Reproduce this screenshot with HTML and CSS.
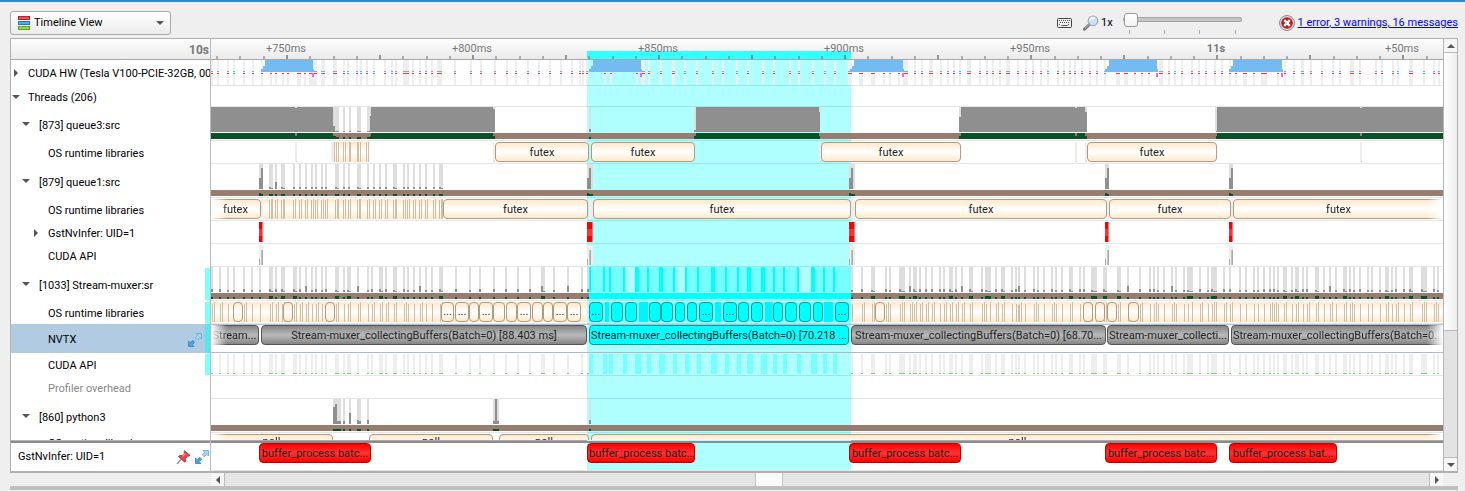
FILE: index.html
```html
<!DOCTYPE html>
<html lang="en">
<head>
<meta charset="utf-8">
<title>Timeline View</title>
<link rel="stylesheet" href="styles.css">
</head>
<body>
<svg class="defs" aria-hidden="true">
  <symbol id="expand" viewBox="0 0 14 14">
    <path d="M8 .5h5.500v5.500L11.700 4.200 9.200 6.700 7.300 4.800 9.800 2.300z" fill="#a9d8f5" stroke="#5ba8d8" stroke-width=".8"/>
    <path d="M6 13.500H.500V8L2.300 9.800 4.800 7.300 6.700 9.200 4.200 11.700z" fill="#49a5e0" stroke="#2b86c4" stroke-width=".8"/>
  </symbol>
</svg>
<header class="toolbar">
  <div class="view-picker">
    <svg class="view-icon" width="12" height="14" viewBox="0 0 12 14" aria-hidden="true">
      <rect x=".5" y=".5" width="11" height="3" fill="#e8515c" stroke="#b8202c"/>
      <rect x=".5" y="5.500" width="11" height="3" fill="#43b1ea" stroke="#1b7db8"/>
      <rect x=".5" y="10.500" width="11" height="3" fill="#9bd455" stroke="#62a023"/>
    </svg>
    <select class="view-select" aria-label="View"><option>Timeline View</option></select>
    <i class="tri tri-down view-arrow"></i>
  </div>
  <div class="tools">
    <button class="tool" aria-label="Keyboard shortcuts">
      <svg width="15" height="10" viewBox="0 0 15 10"><rect x=".5" y=".5" width="14" height="9" rx="1" fill="#eee" stroke="#444"/><path d="M2 2.500h11M3 4.500h10M2 6.500h2M11 6.500h2" stroke="#555" stroke-dasharray="1 1"/><path d="M4.500 7.500h6" stroke="#555"/></svg>
    </button>
    <label class="zoom-label" for="zoom">
      <svg width="16" height="16" viewBox="0 0 16 16" aria-hidden="true"><path d="M1.500 14.200 6.500 9.500" stroke="#777" stroke-width="3" stroke-linecap="round"/><path d="M1.700 13.700 6.200 9.400" stroke="#bbb" stroke-width="1"/><circle cx="10" cy="5.800" r="4.800" fill="#c9e4f6" stroke="#a3abb2" stroke-width="1.200"/><path d="M7 5.500a3 3 0 0 1 5-2" fill="none" stroke="#fff" stroke-width="1.500"/></svg>
      1x
    </label>
    <div class="zoom">
      <input class="zoom-slider" id="zoom" type="range" min="1" max="4" value="1">
      <div class="zoom-ticks"><i></i><i></i><i></i><i></i></div>
    </div>
    <svg class="error-icon" width="16" height="16" viewBox="0 0 16 16" aria-hidden="true"><circle cx="8" cy="8" r="7.500" fill="#ddd" stroke="#8a8a8a"/><circle cx="8" cy="8" r="5.800" fill="#c0161b"/><path d="M5.200 5.200 10.800 10.800M10.800 5.200 5.200 10.800" stroke="#fff" stroke-width="2.600"/></svg>
    <a class="messages" href="#">1 error, 3 warnings, 16 messages</a>
  </div>
</header>

<main class="panel">
  <div class="tree">
    <div class="tree-head">10s</div>
    <div class="row h26 l0"><button class="twisty" aria-label="Expand"><i class="tri tri-right"></i></button>CUDA HW (Tesla V100-PCIE-32GB, 0000:06)</div>
    <div class="row h21 l0"><button class="twisty" aria-label="Collapse"><i class="tri tri-down"></i></button>Threads (206)</div>
    <div class="row h34 l1"><button class="twisty" aria-label="Collapse"><i class="tri tri-down"></i></button>[873] queue3:src</div>
    <div class="row h23 l2">OS runtime libraries</div>
    <div class="row h34 l1"><button class="twisty" aria-label="Collapse"><i class="tri tri-down"></i></button>[879] queue1:src</div>
    <div class="row h23 l2">OS runtime libraries</div>
    <div class="row h23 l2"><button class="twisty" aria-label="Expand"><i class="tri tri-right"></i></button>GstNvInfer: UID=1</div>
    <div class="row h23 l2">CUDA API</div>
    <div class="row h34 l1 marked"><button class="twisty" aria-label="Collapse"><i class="tri tri-down"></i></button>[1033] Stream-muxer:sr</div>
    <div class="row h23 l2 marked">OS runtime libraries</div>
    <div class="row h29 l2 marked current">NVTX<svg class="row-icon" width="14" height="14"><use href="#expand"/></svg></div>
    <div class="row h23 l2 marked">CUDA API</div>
    <div class="row h23 l2 muted">Profiler overhead</div>
    <div class="row h34 l1"><button class="twisty" aria-label="Collapse"><i class="tri tri-down"></i></button>[860] python3</div>
    <div class="cut"><div class="row h21 l2">OS runtime libraries</div></div>
    <div class="row h28 pinned">GstNvInfer: UID=1
      <span class="pin-icons">
        <svg width="15" height="15" viewBox="0 0 15 15" aria-hidden="true"><path d="M1 14 6 8.500" stroke="#8c8c8c" stroke-width="1.200"/><path d="M8.500.8 14 5.500 12.500 6.300 11.600 6 9.500 8.500 9.700 11 8.700 12.200 2.500 6.500 3.600 5.600 6.200 5.700 8.500 3.300 8 2z" fill="#e5484b" stroke="#b32024" stroke-width=".8"/><path d="M9 3.500 6.800 6.500" stroke="#f7a3a3" stroke-width="1.200"/></svg>
        <svg width="14" height="14"><use href="#expand"/></svg>
      </span>
    </div>
  </div>
  <div class="chart">
    <div class="selection"></div>
    <div class="axis" id="axis"></div>
    <div id="lanes"></div>
  </div>
  <div class="vscroll">
    <button class="sbtn up" aria-label="Scroll up"><i class="tri tri-up"></i></button>
    <div class="vthumb"></div>
    <div class="vtrack"></div>
    <button class="sbtn down" aria-label="Scroll down"><i class="tri tri-down"></i></button>
  </div>
</main>
<div class="hscroll">
  <button class="sbtn left" aria-label="Scroll left"><i class="tri tri-left"></i></button>
  <div class="htrack"><div class="hthumb"></div></div>
  <button class="sbtn right" aria-label="Scroll right"><i class="tri tri-right"></i></button>
</div>
<footer class="edge"></footer>
<script src="timeline.js"></script>
</body>
</html>
```
FILE: styles.css
```css
* { box-sizing: border-box; }
body {
  margin: 0;
  background: #efefef;
  border-top: 2px solid #2f8ccb;
  font: 11px/16px Roboto, "DejaVu Sans", sans-serif;
  color: #000;
}
button { padding: 0; border: 0; background: none; font: inherit; display: flex; align-items: center; justify-content: center; }
.defs { position: absolute; width: 0; height: 0; }

.tri { display: block; width: 0; height: 0; border: 4px solid transparent; }
.tri-down { border-top-color: #555; border-bottom: 0; }
.tri-up { border-bottom-color: #555; border-top: 0; }
.tri-right { border-left-color: #555; border-right: 0; }
.tri-left { border-right-color: #555; border-left: 0; }

.toolbar { display: flex; justify-content: space-between; align-items: flex-start; height: 36px; padding: 9px 7px 0 10px; }
.view-picker { position: relative; width: 161px; }
.view-icon { position: absolute; left: 8px; top: 5px; }
.view-arrow { position: absolute; right: 7px; top: 10px; }
.view-select {
  appearance: none; width: 100%; height: 24px; padding: 0 20px 0 23px;
  border: 1px solid #a9a9a9; border-radius: 3px;
  background: linear-gradient(#fff, #ececec);
  font: inherit; color: #000;
}
.tools { display: flex; align-items: center; height: 24px; }
.tool { margin-right: 11px; }
.zoom-label { display: flex; align-items: center; gap: 2px; margin-right: 10px; }
.zoom { width: 119px; margin-right: 37px; }
.zoom-slider { appearance: none; display: block; width: 100%; height: 14px; margin: 0; background: none; }
.zoom-slider::-webkit-slider-runnable-track { height: 5px; border: 1px solid #a5a5a5; border-radius: 2px; background: #c4c4c4; }
.zoom-slider::-webkit-slider-thumb { appearance: none; width: 14px; height: 14px; margin-top: -5px; border: 1px solid #999; border-radius: 3px; background: linear-gradient(#fff, #f2f2f2); }
.zoom-ticks { display: flex; justify-content: space-between; padding: 3px 6px 0; }
.zoom-ticks i { width: 1px; height: 4px; background: #aaa; }
.error-icon { margin-right: 3px; }
.messages { color: #00f; text-decoration: underline; white-space: nowrap; }

.panel { display: grid; grid-template-columns: 200px minmax(0, 1fr) 14px; margin: 0 7px 0 10px; border: 1px solid #b0b0b0; border-width: 1px 1px 2px; background: #fff; }
.tree { border-right: 1px solid #bbb; overflow: hidden; }
.tree-head, .axis { height: 21px; border-bottom: 1px solid #a8a8a8; background: linear-gradient(#fdfdfd, #ebebeb); color: #777; }
.tree-head { padding: 3px 1px 0; text-align: right; font-weight: bold; font-size: 12px; }
.row { position: relative; display: flex; align-items: center; padding-top: 2px; white-space: nowrap; overflow: hidden; }
.h21 { height: 21px; }
.h23 { height: 23px; }
.h26 { height: 26px; }
.h28 { height: 28px; }
.h29 { height: 29px; }
.h34 { height: 34px; }
.row.h34 { padding-top: 4px; }
.l0 { padding-left: 17px; }
.l1 { padding-left: 28px; }
.l2 { padding-left: 37px; }
.twisty { position: absolute; left: 0; top: 0; width: 10px; height: 100%; }
.l1 .twisty { left: 10px; }
.l2 .twisty { left: 20px; }
.muted { color: #888; }
.marked::after { content: ""; position: absolute; right: 0; top: 1px; bottom: 1px; width: 5px; background: #80ffff; }
.current { background: #b1cce2; justify-content: space-between; padding-right: 8px; }
.current::after { top: 0; bottom: 0; background: #57e6f0; }
.cut { height: 8px; overflow: hidden; border-bottom: 1px solid #b4b4b4; }
.cut .row { padding-top: 0; }
.pinned { border-top: 2px solid #8c8c8c; height: 30px; padding: 0 1px 0 7px; justify-content: space-between; }
.pin-icons { display: flex; gap: 4px; }

.chart { position: relative; overflow: hidden; }
.selection { position: absolute; left: 30.520%; width: 21.430%; top: 21px; bottom: 0; background: #afffff; }
.axis { position: relative; }
.axis-sel { position: absolute; left: 30.520%; width: 21.430%; top: 12px; bottom: 0; background: #3ff; }
.tick { position: absolute; bottom: 0; width: 2px; height: 3px; background: rgba(110, 110, 110, .5); }
.tick.major { height: 4px; background: rgba(110, 110, 110, .7); }
.axis-label { position: absolute; top: 2px; transform: translateX(-50%); }
.axis-label.second { font-weight: bold; }
.lane { position: relative; z-index: 0; border-bottom: 1px solid rgba(0, 0, 0, .1); overflow: hidden; }
.lane svg { position: absolute; left: 0; top: 0; width: 100%; height: 100%; shape-rendering: crispEdges; }
.lane.nvtx { border-bottom-color: #a9bccb; border-top: 1px solid #a9c6dd; }
.lane.last { border-bottom-color: #e4e4e4; height: 30px; border-top: 2px solid #8c8c8c; }
.lane-cut { height: 8px; overflow: hidden; border-bottom: 1px solid #aaa; }
.block { position: absolute; top: 1px; height: 20px; padding: 0 1px; border: 1px solid #ac9c82; border-radius: 4px; background: linear-gradient(#ffe9cb, #fff 50%, #ffe9cb); line-height: 19px; text-align: center; white-space: nowrap; overflow: hidden; color: #222; }
.lane-cut .block { line-height: 14px; }
.nvtx .block, .last .block { top: 0; }
.block.dense { z-index: -1; border: 0; border-radius: 0; }
.block.span { border-color: #555; background: linear-gradient(#858585, #bababa 50%, #858585); }
.block.hot { border-color: #00a0a0; background: #0ff; }
.block.red { border-color: #b00; background: linear-gradient(#f00, #f33 50%, #f00); }
.block.pill { line-height: 18px; padding: 0; }
.block.fade-left { border-left: 0; border-radius: 0 4px 4px 0; mask-image: linear-gradient(90deg, transparent, #000 16px); }
.block.fade-right { border-right: 0; border-radius: 4px 0 0 4px; mask-image: linear-gradient(270deg, transparent, #000 16px); }

.vscroll { display: flex; flex-direction: column; border-left: 1px solid #b5b5b5; background: #e3e3e3; }
.sbtn { flex: none; background: #f6f6f6; }
.up, .down { height: 14px; border-bottom: 1px solid #bbb; }
.down { border-top: 1px solid #bbb; border-bottom: 0; }
.vthumb { flex: 278; background: linear-gradient(90deg, #fff, #eee); border-bottom: 1px solid #bbb; }
.vtrack { flex: 126; }
.hscroll { display: flex; height: 13px; margin: 0 22px 0 211px; background: #e5e5e5; }
.left, .right { width: 14px; border-right: 1px solid #bbb; }
.right { border-left: 1px solid #bbb; border-right: 0; }
.htrack { flex: 1; }
.hthumb { width: 28px; height: 100%; margin-left: 44%; background: #fafafa; border: 1px solid #c4c4c4; border-width: 0 1px; }
.edge { height: 4px; margin: 0 7px 0 10px; background: #bfbfbf; }
```
FILE: timeline.js
```js
// Visible window in timeline units.
const START = 211, SPAN = 1232;
const pct = v => (v / SPAN * 100).toFixed(3) + '%';

const cols = text => text.split(' ').map(t => {
  const [a, b] = t.split('-').map(Number);
  return [a, b || a + 2];
});
const rect = (x0, x1, y0, y1, fill) =>
  `<rect x="${x0 - START}" y="${y0}" width="${x1 - x0}" height="${y1 - y0}" fill="${fill}"/>`;
const svg = (h, body) => `<svg viewBox="0 0 ${SPAN} ${h}" preserveAspectRatio="none">${body}</svg>`;
const block = (x0, x1, cls = '', text = '') =>
  `<div class="block ${cls}" style="left:${pct(x0 - START)};width:${pct(x1 - x0)}">${text}</div>`;
const noise = x => (x * 37 + (x % 7) * 11) % 10;
const lane = (h, body, cls = '') => `<div class="lane h${h} ${cls}">${body}</div>`;

const GREY = '#8f8f8f', LIGHT = '#dedede', PALE = '#eeeeee', BROWN = '#967d70', GREEN = '#0a5127';
const SEL0 = 587, SEL1 = 851;

// Time axis: a tick every 1/8 of 50 ms.
let axis = '';
for (let i = -3; i < 50; i++) {
  const x = 286 - START + i * 23.26;
  if (x > 0 && x < SPAN) axis += `<i class="tick ${i % 4 ? '' : 'major'}" style="left:${pct(x)}"></i>`;
}
['+750ms', '+800ms', '+850ms', '+900ms', '+950ms', '11s', '+50ms'].forEach((t, i) => {
  axis += `<span class="axis-label ${t === '11s' ? 'second' : ''}" style="left:${pct(75 + i * 186)}">${t}</span>`;
});
document.getElementById('axis').innerHTML = '<div class="axis-sel"></div>' + axis;

let out = '';

// CUDA hardware
const hw = cols('211 217 227 233 243 252 261 270 275 282 287 297-301 304 309-317 321-325 333-337 343 347 356 360 366 373 384 391 395 403-409 412 419 425 431 437-442 454 470 480 494 506 515 527 538 549 560 571 579 582 586 604 610 636 641-645 648 660 672-675 684 696 712 722 736 747 762 773 789 798 812 824 834 848-852 859-863 871-875 883 889 898 903-908 914 921 929-933 940 947 953 959 967-971 979 986 992 999 1006-1010 1017 1025 1032 1040 1047 1057 1063 1069 1074 1081 1089 1096 1104 1116-1120 1124-1128 1134 1141 1148 1159-1163 1168 1174 1181 1191 1198 1205 1214 1221 1229 1235 1243-1247 1253 1261-1267 1277 1284 1293 1301-1304 1310 1321 1332 1339 1350-1354 1359 1375 1381 1392 1397 1409-1413 1423 1433 1438');
let g = '';
hw.forEach(([a, b]) => {
  g += rect(a, b, 0, 25, PALE) + rect(a, b, 11, 12, '#68b1e6') + rect(a, b, 13, 14, '#f03a3a');
  if (noise(a) === 3) g += rect(a, a + 2, 13, 14, '#2bb5f0');
});
[[261, 313], [589, 641], [850, 903], [1105, 1157], [1229, 1282]].forEach(([a, b]) => {
  g += rect(a, b + 1, 9, 12, '#74bbf1') + rect(a + 2, b, 6, 9, '#74bbf1') + rect(a + 4, b, 0, 6, '#74bbf1') + rect(b - 1, b + 1, 13, 17, '#dd6cf5');
});
out += lane(26, svg(25, g));
out += lane(21, '');

// queue3
g = rect(211, 1443, 26, 32, BROWN);
cols('333-339 343 349 357-361 367-370').forEach(([a, b]) => {
  g += rect(a, b, 0, 24, LIGHT) + rect(a, b, 24, 25, GREY) + rect(a, b, 30, 32, GREEN);
});
g += rect(589, 591, 0, 25, LIGHT) + rect(589, 591, 22, 25, GREY) + rect(589, 591, 30, 32, GREEN);
[[211, 333], [370, 495], [694, 820], [959, 1087], [1216, 1443]].forEach(([a, b]) => {
  g += rect(a, b, 0, 25, GREY) + rect(a, b, 26, 32, GREEN);
});
[295, 1075, 1360].forEach(x => { g += rect(x, x + 2, 0, 1, LIGHT) + rect(x, x + 2, 26, 29, BROWN); });
[[493, 2], [694, 23], [819, 5], [959, 10], [1085, 5], [1215, 24], [369, 9]].forEach(([x, h]) => {
  g += rect(x, x + 2, 0, h, LIGHT) + rect(x, x + 2, 26, 29, BROWN);
});
g += rect(333, 335, 19, 25, GREY) + rect(333, 336, 29, 32, GREEN);
out += lane(34, svg(33, g));
g = '';
cols('295-297 331-335 493-495 819-821 1075-1077 1085-1087 1360-1362').forEach(([a, b]) => { g += rect(a, b, 1, 21, PALE) + rect(b - 1, b, 20, 21, '#c9c0b4'); });
[334, 336, 338, 343, 345, 349, 350, 357, 358, 360, 366, 368].forEach(x => { g += rect(x, x + 1, 1, 21, '#cdbfa8'); });
out += lane(23, block(334, 370, 'dense') + svg(22, g) +
  block(495, 589, '', 'futex') + block(591, 695, '', 'futex') + block(821, 961, '', 'futex') + block(1087, 1217, '', 'futex'));

// queue1
const q1 = cols('269-273 275 281-285 293 299 305 311 315 321 325 335-339 343 348 357-361 367 373 379 385 393-397 403 407 413 419 425 433 439-443');
const bursts = [[259, 263], [587, 593], [849, 855], [1105, 1109], [1229, 1233]];
g = rect(211, 1443, 26, 32, BROWN);
q1.forEach(([a, b]) => {
  const h = a === 275 ? 7 : 2;
  g += rect(a, b, 0, 25, LIGHT) + rect(a, a + 2, 25 - h, 25, GREY) + rect(a, b, 24, 25, GREY) + rect(a, b, 30, 32, GREEN);
});
bursts.forEach(([a, b]) => {
  g += rect(a, b, 0, 25, LIGHT) + rect(a, a + 2, 14, 25, GREY) + rect(a + 2, a + 4, 4, 25, GREY) + rect(a, b, 30, 32, GREEN) + rect(a, a + 2, 29, 32, GREEN);
});
out += lane(34, svg(33, g));
g = '';
bursts.forEach(([a, b]) => { g += rect(a + 2, b, 1, 21, PALE); });
q1.forEach(([a, b]) => {
  g += rect(a, a + 2, 1, 3, PALE) + rect(a, a + 1, 2, 21, '#c9bba5') + rect(a + 2, a + 3, 1, 21, '#cdbfa8');
  if (b - a > 3) g += rect(b - 1, b, 1, 21, '#cdbfa8');
});
out += lane(23, block(263, 443, 'dense') + svg(22, g) +
  block(211, 261, 'fade-left', 'futex') + block(443, 588, '', 'futex') + block(593, 851, '', 'futex') +
  block(855, 1107, '', 'futex') + block(1109, 1231, '', 'futex') + block(1233, 1443, 'fade-right', 'futex'));
g = '';
bursts.forEach(([a, b]) => { g += rect(a, b, 1, 21, '#c98a8a') + rect(a, b - 1, 1, 8, '#f00') + rect(a, b - 1, 8, 15, '#f33') + rect(a, b - 1, 15, 21, '#f00'); });
out += lane(23, svg(22, g));
g = '';
bursts.forEach(([a, b]) => { g += rect(a, b, 1, 21, PALE) + rect(a, a + 1, 15, 21, '#aaa') + rect(a + 2, a + 4, 6, 21, '#c4c4c4') + rect(a + 3, a + 4, 6, 21, '#aaa'); });
out += lane(23, svg(22, g));

// Stream-muxer
const mux = cols('211 219 227 233 243 251 259 269-273 275 281-285 293-297 299 305 311 315 321 325 335-339 343 347-351 357 367 371 379-383 385 393-397 403 407 413 419 425 431 439-443 455 469 479 493 505 517 529 541-545 553 567 581 587 851 861 871-875 885 889 899-905 909 913-917 919 925 931 939 943 949-953 955 961 969-973 981 985-991 995 1001-1005 1011 1015 1018 1024 1033 1037 1043 1051 1055 1061 1069-1073 1079 1083 1091-1097 1103-1107 1117-1121 1127 1139 1149 1153 1157 1163 1171 1175 1183 1187-1193 1199 1207 1211-1217 1223 1229 1239 1245 1253 1257 1263 1269 1273 1277 1283-1287 1291 1295-1299 1302 1306 1315-1319 1323 1329 1335 1343-1347 1349 1353 1359 1367 1371 1379 1385-1389 1391 1395 1403 1409-1413 1421-1427 1433 1437');
const muxSel = cols('589 603 609 623 635-639 647 659-663 673 685 697 711-715 725 737 747-751 761-765 773 783 797 811-815 823 833');
g = rect(211, 1443, 26, 32, BROWN);
mux.forEach(([a, b]) => {
  const h = noise(a) > 8 ? 6 : noise(a) > 3 ? 3 : 2;
  g += rect(a, b, 0, 25, LIGHT) + rect(a, a + 2, 25 - h, 25, GREY) + rect(a, b, 24, 25, GREY) + rect(a, b, 30 - (b - a > 3), 32, GREEN);
});
g += rect(589, 625, 0, 25, '#7ff') + rect(635, 677, 0, 25, '#7ff') + rect(685, 799, 0, 25, '#7ff') + rect(811, SEL1, 0, 25, '#7ff') + rect(589, SEL1, 26, 32, '#0ff');
muxSel.forEach(([a, b]) => { g += rect(a, b, 0, 25, '#0ff'); });
out += lane(34, svg(33, g));

g = '';
mux.forEach(([a, b]) => {
  if (a > 443 && a < SEL1) return;
  g += rect(a, a + 2, 1, 3 + noise(a) % 4, PALE) + rect(a + 1, a + 2, 3, 21, '#ccc0ab');
  if (noise(a) > 4) g += rect(a + 3, a + 4, 1, 21, '#cdbfa8');
  if (b - a > 3) g += rect(b - 1, b, 1, 21, '#cdbfa8');
});
[605, 646, 717, 772, 832].forEach(x => { g += rect(x, x + 1, 1, 21, '#5ddede'); });
[[605, 609], [639, 648], [715, 721], [765, 772], [824, 833]].forEach(([a, b]) => { g += rect(a, b, 1, 21, '#00f4ff'); });
let pills = '';
[[233, 243], [283, 293], [325, 335], [441, 454, 1], [455, 469, 1], [469, 479], [479, 493, 1], [493, 505], [506, 517], [517, 531, 1], [532, 543], [543, 553], [553, 567, 1], [567, 581, 1],
 [589, 603, 1], [611, 623], [625, 637], [649, 661], [661, 673], [675, 685], [687, 697], [699, 713, 1], [723, 737, 1], [738, 749], [751, 763], [773, 783], [785, 797], [799, 811], [813, 823], [835, 849, 1],
 [875, 885], [1083, 1093], [1095, 1105], [1107, 1117], [1128, 1139]].forEach(([a, b, dots]) => {
  pills += block(a, b, a >= SEL0 && b <= SEL1 ? 'pill hot' : 'pill', dots ? '...' : '');
});
out += lane(23, block(211, 587, 'dense') + block(851, 1443, 'dense') + svg(22, rect(589, 851, 1, 21, '#7ff') + g) + pills);

// NVTX ranges
const range = 'Stream-muxer_collectingBuffers(Batch=0)';
out += lane(29, block(211, 259, 'span fade-left', 'Stream...') + block(261, 587, 'span', range + ' [88.403 ms]') +
  block(589, 849, 'span hot', range + ' [70.218 ...') + block(851, 1106, 'span', range + ' [68.70...') +
  block(1107, 1229, 'span', 'Stream-muxer_collecti...') + block(1231, 1443, 'span fade-right', 'Stream-muxer_collectingBuffers(Batch=0...'), 'nvtx');

g = '';
mux.forEach(([a, b]) => { g += rect(a, b, 1, 21, PALE) + rect(a, b, 20, 21, '#7fcf72'); });
muxSel.forEach(([a, b]) => { g += rect(a, b + 2, 1, 21, '#7ff'); });
out += lane(23, svg(22, g));
out += lane(23, '');

// python3
g = rect(211, 1443, 26, 32, BROWN);
[[333, 341, 20], [343, 345, 3], [349, 351, 11], [357, 361, 4], [367, 369, 4], [493, 499, 25], [589, 591, 4]].forEach(([a, b, h]) => {
  g += rect(a, b, 0, 25, LIGHT) + rect(a, b, 22, 25, GREY) + rect(a, b, 30, 32, GREEN);
  const x = b - a > 5 ? a + 2 : a;
  g += rect(x, x + 2, 25 - h, 25, GREY);
});
g += rect(333, 335, 8, 25, GREY);
out += lane(34, svg(33, g));
out += '<div class="lane-cut">' + lane(23, block(211, 333, 'fade-left', 'poll') + block(369, 493, '', 'poll') + block(499, 589, '', 'poll') + block(591, 1443, 'fade-right', 'poll')) + '</div>';

// Pinned row
const batch = 'buffer_process bat';
out += lane(28, block(259, 371, 'red', batch + 'c...') + block(587, 695, 'red', batch + 'c...') + block(849, 961, 'red', batch + 'c...') +
  block(1105, 1217, 'red', batch + 'c...') + block(1229, 1337, 'red', batch + '...'), 'last');

document.getElementById('lanes').innerHTML = out;
```
